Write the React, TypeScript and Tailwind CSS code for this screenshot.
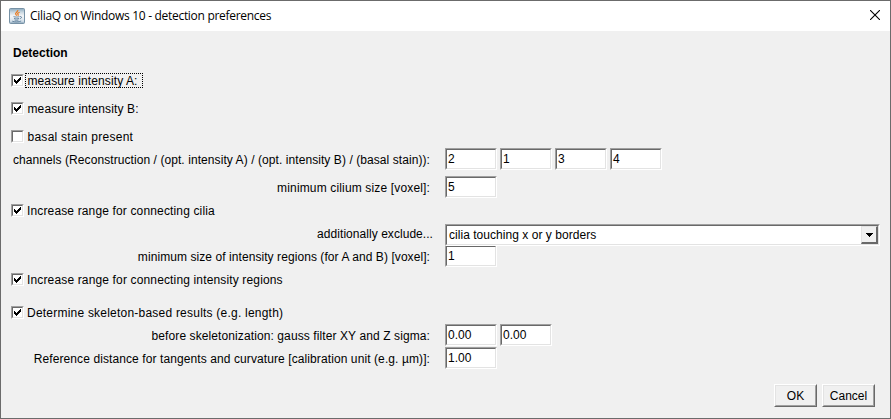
import type { ReactNode } from "react";

function JavaIcon() {
  return (
    <svg width="16" height="16" viewBox="0 0 16 16" className="shrink-0">
      <defs>
        <linearGradient id="tile" x1="0" y1="0" x2="0" y2="1">
          <stop offset="0" stopColor="#8aa9bd" />
          <stop offset="0.25" stopColor="#cbd8e1" />
          <stop offset="0.5" stopColor="#f4f6f8" />
          <stop offset="0.85" stopColor="#d3dfe9" />
          <stop offset="1" stopColor="#7f9db4" />
        </linearGradient>
      </defs>
      <rect x="0.5" y="0.5" width="15" height="15" rx="1" fill="url(#tile)" stroke="#7691a5" />
      <path d="M8.8 2.2c.4 1.8-3.3 2.4-2 4.2l.9 1.2M10.6 4.2c-2.2.8-2.3 1.6-1.5 2.3.4.5.1.9-.4 1.3" fill="none" stroke="#e8791e" strokeWidth="1.2" />
      <path d="M4.5 8.6c1.6.6 4.6.6 6 0M5 10.4c1.4.6 3.9.6 5.1 0M5.5 12c1.2.4 3 .4 4 0M11 8.6c2.2-.5 2 1.7-.1 2.1M3.2 13.2c2.4.9 6.8.9 9-.2" fill="none" stroke="#4f7290" strokeWidth="0.8" />
    </svg>
  );
}

function Box({ on }: { on?: boolean }) {
  return (
    <span className="mt-[5px] block h-[13px] w-[13px] shrink-0 border border-t-[#a0a0a0] border-l-[#a0a0a0] border-r-white border-b-white">
      <span className="block h-[11px] w-[11px] border border-t-[#696969] border-l-[#696969] border-r-[#e3e3e3] border-b-[#e3e3e3] bg-white">
        {on && (
          <svg width="9" height="9" viewBox="0 0 9 9" shapeRendering="crispEdges">
            <path d="M1 3h1v1h1v1h1v-1h1v-1h1v-1h1v-1h1v3h-1v1h-1v1h-1v1h-1v1h-1v-1h-1v-1h-1z" fill="#000" />
          </svg>
        )}
      </span>
    </span>
  );
}

function Check({ on, focus, className, children }: { on?: boolean; focus?: boolean; className: string; children: ReactNode }) {
  return (
    <div className="flex h-[22px] items-start pl-[10px]">
      <Box on={on} />
      <span className={"mt-[4px] ml-[1px] block h-[15px] border border-dotted " + (focus ? "w-[118px] border-black " : "border-transparent ") + className}>
        {children}
      </span>
    </div>
  );
}

function Field({ value }: { value: string }) {
  return (
    <div className="h-[22px] w-[52px] border border-t-[#a0a0a0] border-l-[#a0a0a0] border-r-white border-b-white">
      <div className="h-full border border-t-[#696969] border-l-[#696969] border-r-[#e3e3e3] border-b-[#e3e3e3] bg-white pt-[2px] pl-[1px]">
        {value}
      </div>
    </div>
  );
}

function Row({ label, className, children }: { label: string; className: string; children: ReactNode }) {
  return (
    <div className="flex h-[22px] items-start">
      <div className="flex w-[444px] shrink-0 justify-end pr-[15px]">
        <span className={className}>{label}</span>
      </div>
      <div className="flex gap-[3px]">{children}</div>
    </div>
  );
}

function Button({ className, children }: { className: string; children: ReactNode }) {
  return (
    <div className={"h-[23px] border border-t-white border-l-white border-r-[#696969] border-b-[#696969] " + className}>
      <div className="flex h-full items-center justify-center border border-t-[#e3e3e3] border-l-[#e3e3e3] border-r-[#a0a0a0] border-b-[#a0a0a0] bg-[#f0f0f0] pt-px">
        {children}
      </div>
    </div>
  );
}

export default function App() {
  return (
    <div className="h-[419px] w-[891px] overflow-hidden border border-[#6b6b6b] bg-[#f0f0f0] font-['Liberation_Sans',Arial,sans-serif] text-[12px] leading-[14px] whitespace-nowrap text-black">
      <header className="flex h-[30px] items-center bg-white pl-[8px]">
        <JavaIcon />
        <span className="ml-[5px] font-['Open_Sans','Noto_Sans',sans-serif] text-[12px] tracking-[-0.3px]">CiliaQ on Windows 10 - detection preferences</span>
        <svg width="10" height="10" viewBox="0 0 10 10" className="mr-[10px] ml-auto -translate-y-px">
          <path d="M0 0L10 10M10 0L0 10" stroke="#000" strokeWidth="1.1" />
        </svg>
      </header>
      <main>
        <div className="mt-[11px] flex h-[22px] items-center pl-[12px] font-bold">Detection</div>
        <div className="mt-[5px] flex flex-col gap-[6px]">
          <Check on focus className="pl-[1.5px] tracking-[0.1px]">measure intensity A:</Check>
          <Check on className="pl-[1.5px] tracking-[0.12px]">measure intensity B:</Check>
          <Check className="pl-[1.5px] tracking-[0.26px]">basal stain present</Check>
        </div>
        <div className="mt-[1px] flex flex-col gap-[6px]">
          <Row label="channels (Reconstruction / (opt. intensity A) / (opt. intensity B) / (basal stain)):" className="mt-[5px] tracking-[0.073px]">
            <Field value="2" />
            <Field value="1" />
            <Field value="3" />
            <Field value="4" />
          </Row>
          <Row label="minimum cilium size [voxel]:" className="mt-[5px] tracking-[0.15px]">
            <Field value="5" />
          </Row>
        </div>
        <div className="mt-[1px]">
          <Check on className="pl-[1px] tracking-[0.145px]">Increase range for connecting cilia</Check>
        </div>
        <div className="mt-[3px]">
          <Row label="additionally exclude..." className="-mr-[3px] mt-[3px] tracking-[0.05px]">
            <div className="relative z-10 h-[22px] w-[435px] border border-t-[#a0a0a0] border-l-[#a0a0a0] border-r-white border-b-white">
              <div className="flex h-full items-start border border-t-[#696969] border-l-[#696969] border-r-[#e3e3e3] border-b-[#e3e3e3] bg-white pl-[2px]">
                <span className="mt-[2px] tracking-[0.04px]">cilia touching x or y borders</span>
                <span className="ml-auto flex h-[18px] w-[17px] items-center justify-center border-t border-r-2 border-b-2 border-l border-t-[#e3e3e3] border-r-[#696969] border-b-[#696969] border-l-[#e3e3e3] bg-[#f0f0f0]">
                  <svg width="7" height="4" viewBox="0 0 7 4" shapeRendering="crispEdges">
                    <path d="M0 0h7v1h-1v1h-1v1h-1v1h-1v-1h-1v-1h-1v-1h-1z" />
                  </svg>
                </span>
              </div>
            </div>
          </Row>
          <div className="-mt-px">
            <Row label="minimum size of intensity regions (for A and B) [voxel]:" className="mt-[5px] tracking-[0.072px]">
              <Field value="1" />
            </Row>
          </div>
        </div>
        <div className="mt-px">
          <Check on className="pl-[1px] tracking-[0.148px]">Increase range for connecting intensity regions</Check>
        </div>
        <div className="mt-[11px]">
          <Check on className="pl-[1px] tracking-[0.22px]">Determine skeleton-based results (e.g. length)</Check>
        </div>
        <div className="mt-[1px] flex flex-col gap-[1px]">
          <Row label="before skeletonization: gauss filter XY and Z sigma:" className="mt-[5px] tracking-[0.1px]">
            <Field value="0.00" />
            <Field value="0.00" />
          </Row>
          <Row label="Reference distance for tangents and curvature [calibration unit (e.g. µm)]:" className="mt-[5px] tracking-[0.095px]">
            <Field value="1.00" />
          </Row>
        </div>
        <div className="mt-[15px] flex justify-end gap-[5px] pr-[15px]">
          <Button className="w-[43px]">OK</Button>
          <Button className="w-[53px]">Cancel</Button>
        </div>
      </main>
    </div>
  );
}
